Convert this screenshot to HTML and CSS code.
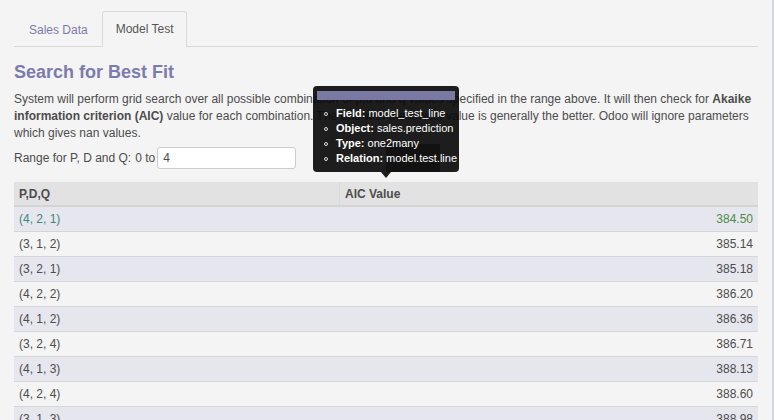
FILE: index.html
```html
<!DOCTYPE html>
<html>
<head>
<meta charset="utf-8">
<link rel="stylesheet" href="styles.css">
</head>
<body>
<div class="page">
  <ul class="tabs">
    <li class="tab">Sales Data</li>
    <li class="tab active">Model Test</li>
  </ul>
  <div class="content">
    <h1 class="title">Search for Best Fit</h1>
    <p class="desc">System will perform grid search over all possible combination of p,d and q values specified in the range above. It will then check for <b>Akaike information criterion (AIC)</b> value for each combination. The one with the lowest value is generally the better. Odoo will ignore parameters which gives nan values.</p>
    <div class="range">
      <span>Range for P, D and Q:</span>
      <span>0 to</span>
      <input class="range-input" type="text" value="4">
    </div>
    <table class="grid">
      <thead>
        <tr><th class="c1">P,D,Q</th><th class="c2">AIC Value</th></tr>
      </thead>
      <tbody>
        <tr class="best"><td>(4, 2, 1)</td><td class="num">384.50</td></tr>
        <tr><td>(3, 1, 2)</td><td class="num">385.14</td></tr>
        <tr><td>(3, 2, 1)</td><td class="num">385.18</td></tr>
        <tr><td>(4, 2, 2)</td><td class="num">386.20</td></tr>
        <tr><td>(4, 1, 2)</td><td class="num">386.36</td></tr>
        <tr><td>(3, 2, 4)</td><td class="num">386.71</td></tr>
        <tr><td>(4, 1, 3)</td><td class="num">388.13</td></tr>
        <tr><td>(4, 2, 4)</td><td class="num">388.60</td></tr>
        <tr><td>(3, 1, 3)</td><td class="num">388.98</td></tr>
      </tbody>
    </table>
  </div>
  <div class="tooltip">
    <div class="tip-title"></div>
    <ul class="tip-list">
      <li><b>Field:</b> model_test_line</li>
      <li><b>Object:</b> sales.prediction</li>
      <li><b>Type:</b> one2many</li>
      <li><b>Relation:</b> model.test.line</li>
    </ul>
    <div class="tip-shade"></div>
    <div class="tip-arrow"></div>
  </div>
</div>
</body>
</html>
```
FILE: styles.css
```css
html, body {
  margin: 0;
  padding: 0;
  background: #f4f4f4;
  height: 100%;
  overflow: hidden;
}
body {
  font-family: "Liberation Sans", Arial, sans-serif;
  font-size: 12px;
  color: #4c4c4c;
}
.page {
  position: relative;
  height: 420px;
  padding: 11px 14px 0 14px;
  border-right: 2px solid #d4d4dc;
  box-sizing: border-box;
  width: 774px;
}
.tabs {
  list-style: none;
  margin: 0;
  padding: 0;
  display: flex;
  border-bottom: 1px solid #d9d9d9;
  height: 35px;
}
.tab {
  padding: 0 13px 0 14px;
  line-height: 36px;
  color: #7c7bad;
  border: 1px solid transparent;
  border-bottom: none;
  border-radius: 3px 3px 0 0;
}
.tab.active {
  color: #555;
  border-color: #d9d9d9;
  background: #f4f4f4;
  box-sizing: border-box;
  padding: 0 12px 0 13px;
  margin-bottom: -1px;
  height: 36px;
  line-height: 34px;
}
.title {
  margin: 14px 0 0 0;
  font-size: 18px;
  font-weight: bold;
  color: #7c7bad;
  line-height: 22px;
}
.desc {
  margin: 8px 0 0 0;
  line-height: 17px;
}
.desc b { color: #4c4c4c; }
.range {
  display: flex;
  align-items: center;
  gap: 4px;
  margin-top: 5px;
}
.range-input {
  width: 139px;
  height: 22px;
  box-sizing: border-box;
  border: 1px solid #ccc;
  border-radius: 3px;
  background: #fff;
  font-family: "Liberation Sans", Arial, sans-serif;
  font-size: 12px;
  color: #4c4c4c;
  padding: 0 5px;
  margin-left: -2px;
}
.grid {
  margin-top: 13px;
  width: 744px;
  border-collapse: collapse;
  font-size: 12px;
}
.grid th {
  background: #e2e2e2;
  text-align: left;
  font-weight: bold;
  color: #4c4c4c;
  height: 23px;
  padding: 0 5px;
  border-bottom: 2px solid #d4d4d4;
}
.grid th.c1 {
  width: 315px;
  border-right: 1px solid #d9d9d9;
}
.grid td {
  height: 24px;
  padding: 0 5px;
  border-bottom: 1px solid #d6d6d6;
  color: #4c4c4c;
}
.grid tbody tr:nth-child(odd) td { background: #e6e6ee; }
.grid tbody tr:nth-child(even) td { background: #f4f4f4; }
.grid td.num { text-align: right; }
.grid tr.best td { color: #3f8878; }
.grid tr.best td.num { color: #4f8a4a; }
.tooltip {
  position: absolute;
  left: 313px;
  top: 86px;
  width: 146px;
  height: 86px;
  background: rgba(10, 10, 10, 0.92);
  border-radius: 4px;
  color: #fff;
  font-size: 11px;
  box-sizing: border-box;
  padding: 5px 4px 0 4px;
}
.tip-title {
  height: 9px;
  background: #8584b4;
  opacity: 0.9;
}
.tip-list {
  margin: 6px 0 0 0;
  padding: 0 0 0 19px;
  list-style: none;
  font-size: 11px;
  line-height: 15px;
  position: relative;
  z-index: 1;
}
.tip-list li {
  white-space: nowrap;
  position: relative;
}
.tip-list li::before {
  content: "";
  position: absolute;
  left: -12px;
  top: 6px;
  width: 2px;
  height: 2px;
  border: 1px solid #ddd;
  border-radius: 50%;
}
.tip-shade {
  position: absolute;
  left: 73px;
  top: 58px;
  width: 54px;
  height: 28px;
  background: rgba(0, 0, 0, 0.35);
}
.tip-arrow {
  position: absolute;
  left: 68px;
  bottom: -6px;
  width: 0;
  height: 0;
  border-left: 5px solid transparent;
  border-right: 5px solid transparent;
  border-top: 6px solid rgba(10, 10, 10, 0.92);
}
```
